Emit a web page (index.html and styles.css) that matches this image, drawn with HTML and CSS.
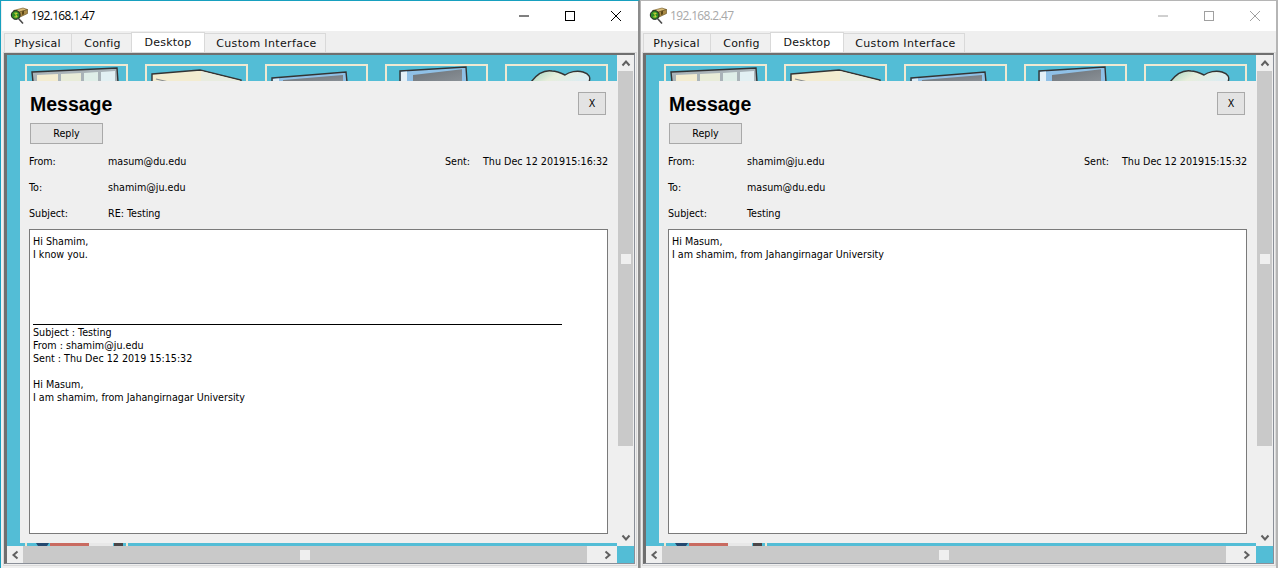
FILE: index.html
```html
<!DOCTYPE html>
<html lang="en">
<head>
    <meta charset="UTF-8">
    <title>Packet Tracer PCs</title>
    <link rel="stylesheet" href="styles.css">
</head>
<body>
    <svg class="defs" width="0" height="0">
        <defs>
            <linearGradient id="cloudFill" x1="0" x2="1" y1="0" y2="0.3">
                <stop offset="0" stop-color="#9fd3bd"/>
                <stop offset="0.5" stop-color="#e8eedc"/>
                <stop offset="1" stop-color="#dcecf0"/>
            </linearGradient>
            <linearGradient id="screenFill" x1="0" x2="1" y1="0" y2="1">
                <stop offset="0" stop-color="#6b7278"/>
                <stop offset="1" stop-color="#8b9197"/>
            </linearGradient>
            <symbol id="pcIcon" viewBox="0 0 18 18">
                <path d="M8.500 11.500l4.500 5" stroke="#fff" stroke-width="3" fill="none"/>
                <path d="M8.500 11.500l4.500 5" stroke="#4a4a4a" stroke-width="1.600" fill="none"/>
                <path d="M3.500 3.500L13 1l4.500 1.500L8 5.500z" fill="#d9bd7a" stroke="#6b5320" stroke-width="0.6"/>
                <path d="M8 5.500l9.500-3v4L9 10.500z" fill="#a98a45" stroke="#5d4818" stroke-width="0.6"/>
                <path d="M12 4.500l2-.7v3.500l-2 .8z" fill="#5d4818"/>
                <circle cx="5.700" cy="8" r="4.400" fill="#2f8a26" stroke="#1d1d1d" stroke-width="1"/>
                <path d="M4.400 6.200h2.800l-1.500 1.600 1.500 2.100H4.400" fill="none" stroke="#e8e43c" stroke-width="1"/>
            </symbol>
            <symbol id="chevUp" viewBox="0 0 10 8">
                <path d="M1.500 6.500L5 2.500l3.500 4" fill="none" stroke="#606060" stroke-width="2"/>
            </symbol>
            <symbol id="chevDown" viewBox="0 0 10 8">
                <path d="M1.500 1.500L5 5.500l3.500-4" fill="none" stroke="#606060" stroke-width="2"/>
            </symbol>
            <symbol id="chevLeft" viewBox="0 0 8 10">
                <path d="M6.500 1.500L2.500 5l4 3.500" fill="none" stroke="#606060" stroke-width="2"/>
            </symbol>
            <symbol id="chevRight" viewBox="0 0 8 10">
                <path d="M1.500 1.500L5.500 5l-4 3.500" fill="none" stroke="#606060" stroke-width="2"/>
            </symbol>
            <symbol id="appTerminal" viewBox="0 0 99 16">
                <path d="M5 6L90 2l1 14H6z" fill="#a9b3b8" stroke="#333" stroke-width="1.400"/>
                <path d="M10 9l21-1v8H10z" fill="#f3ecd0"/>
                <path d="M34 8l20-1v9H34z" fill="#e8ecd8"/>
                <path d="M57 7l14-1v10H57z" fill="#dfeee8"/>
                <path d="M74 6l14-1v11H74z" fill="#e2f0f3"/>
            </symbol>
            <symbol id="appConfig" viewBox="0 0 99 16">
                <path d="M5 8L53 4l41 10v2H5z" fill="#f3ecd0" stroke="#333" stroke-width="1.400"/>
                <path d="M54 5l39 10v1H54z" fill="#e8ecdf"/>
                <path d="M9 13l13 3" stroke="#8a8f90" stroke-width="1.200"/>
            </symbol>
            <symbol id="appScreen" viewBox="0 0 99 16">
                <path d="M5 12L79 6l1 10H5z" fill="#8fc0e6" stroke="#333" stroke-width="1.400"/>
                <path d="M6 13l6-.5V16H6z" fill="#dcecf5"/>
                <path d="M16 14l60-5v7H16z" fill="url(#screenFill)"/>
            </symbol>
            <symbol id="appBrowser" viewBox="0 0 99 16">
                <path d="M13 5L79 1l1 15H13z" fill="#8fc0e6" stroke="#333" stroke-width="1.400"/>
                <path d="M14 6l6-.4V16h-6z" fill="#e4f0f7"/>
                <path d="M26 9l49-5.700V16H26z" fill="url(#screenFill)"/>
            </symbol>
            <symbol id="appCloud" viewBox="0 0 99 16">
                <path d="M24 16C30 8 38 4 45 5c5 0 9 2 13 4 4-3 12-5 18-3 6 2 8 5 6 10z" fill="url(#cloudFill)" stroke="#333" stroke-width="1.400"/>
            </symbol>
            <symbol id="appLower" viewBox="0 0 99 16">
                <path d="M7 0h17l-4 6h-9z" fill="#24486f"/>
                <path d="M23 0h39v6H23z" fill="#c96a60"/>
                <path d="M62 0h24v6H62z" fill="#e8e8e8"/>
                <path d="M87 0h9v6h-9z" fill="#4a4648"/>
            </symbol>
        </defs>
    </svg>

    <div class="desktop">
        <!-- first PC, focused -->
        <section class="window window-active">
            <header class="titlebar">
                <svg class="title-icon"><use href="#pcIcon"/></svg>
                <span class="title-text">192.168.1.47</span>
                <div class="win-controls">
                    <svg class="win-btn" viewBox="0 0 12 12"><path d="M1 6h10" stroke="currentColor" fill="none"/></svg>
                    <svg class="win-btn" viewBox="0 0 12 12"><rect x="1.500" y="1.500" width="9" height="9" stroke="currentColor" fill="none"/></svg>
                    <svg class="win-btn" viewBox="0 0 12 12"><path d="M1 1l10 10M11 1L1 11" stroke="currentColor" fill="none"/></svg>
                </div>
            </header>
            <nav class="tabs">
                <span class="tab tab-physical">Physical</span>
                <span class="tab tab-config">Config</span>
                <span class="tab tab-desktop">Desktop</span>
                <span class="tab tab-custom">Custom Interface</span>
            </nav>
            <div class="panel">
                <div class="viewport">
                    <div class="canvas">
                        <div class="app-row">
                            <div class="tile"><svg class="tile-art"><use href="#appTerminal"/></svg></div>
                            <div class="tile"><svg class="tile-art"><use href="#appConfig"/></svg></div>
                            <div class="tile"><svg class="tile-art"><use href="#appScreen"/></svg></div>
                            <div class="tile"><svg class="tile-art"><use href="#appBrowser"/></svg></div>
                            <div class="tile"><svg class="tile-art"><use href="#appCloud"/></svg></div>
                        </div>
                        <div class="app-row app-row-low">
                            <div class="tile"><svg class="tile-art"><use href="#appLower"/></svg></div>
                        </div>
                        <div class="dialog">
                            <div class="dialog-head">
                                <h1 class="dialog-title">Message</h1>
                                <button class="btn btn-close">X</button>
                            </div>
                            <button class="btn btn-reply">Reply</button>
                            <div class="field field-first">
                                <span class="field-label">From:</span>
                                <span class="field-value">masum@du.edu</span>
                                <span class="sent-label">Sent:</span>
                                <span class="sent-value">Thu Dec 12 201915:16:32</span>
                            </div>
                            <div class="field">
                                <span class="field-label">To:</span>
                                <span class="field-value">shamim@ju.edu</span>
                            </div>
                            <div class="field">
                                <span class="field-label">Subject:</span>
                                <span class="field-value">RE: Testing</span>
                            </div>
                            <div class="msg-body">
                                <div>Hi Shamim,</div>
                                <div>I know you.</div>
                                <div class="quote-rule"></div>
                                <div>Subject : Testing</div>
                                <div>From : shamim@ju.edu</div>
                                <div>Sent : Thu Dec 12 2019 15:15:32</div>
                                <div class="blank-line"></div>
                                <div>Hi Masum,</div>
                                <div>I am shamim, from Jahangirnagar University</div>
                            </div>
                        </div>
                    </div>
                    <div class="vscroll">
                        <span class="scroll-btn"><svg class="chev-v"><use href="#chevUp"/></svg></span>
                        <div class="vtrack"><div class="vtrack-fill"><span class="thumb"></span></div></div>
                        <span class="scroll-btn"><svg class="chev-v"><use href="#chevDown"/></svg></span>
                    </div>
                    <div class="hscroll">
                        <span class="scroll-btn"><svg class="chev-h"><use href="#chevLeft"/></svg></span>
                        <div class="htrack"><span class="thumb"></span></div>
                        <span class="scroll-btn scroll-btn-wide"><svg class="chev-h"><use href="#chevRight"/></svg></span>
                    </div>
                    <div class="corner"></div>
                </div>
            </div>
        </section>

        <!-- second PC -->
        <section class="window window-idle">
            <header class="titlebar">
                <svg class="title-icon"><use href="#pcIcon"/></svg>
                <span class="title-text">192.168.2.47</span>
                <div class="win-controls">
                    <svg class="win-btn" viewBox="0 0 12 12"><path d="M1 6h10" stroke="currentColor" fill="none"/></svg>
                    <svg class="win-btn" viewBox="0 0 12 12"><rect x="1.500" y="1.500" width="9" height="9" stroke="currentColor" fill="none"/></svg>
                    <svg class="win-btn" viewBox="0 0 12 12"><path d="M1 1l10 10M11 1L1 11" stroke="currentColor" fill="none"/></svg>
                </div>
            </header>
            <nav class="tabs">
                <span class="tab tab-physical">Physical</span>
                <span class="tab tab-config">Config</span>
                <span class="tab tab-desktop">Desktop</span>
                <span class="tab tab-custom">Custom Interface</span>
            </nav>
            <div class="panel">
                <div class="viewport">
                    <div class="canvas">
                        <div class="app-row">
                            <div class="tile"><svg class="tile-art"><use href="#appTerminal"/></svg></div>
                            <div class="tile"><svg class="tile-art"><use href="#appConfig"/></svg></div>
                            <div class="tile"><svg class="tile-art"><use href="#appScreen"/></svg></div>
                            <div class="tile"><svg class="tile-art"><use href="#appBrowser"/></svg></div>
                            <div class="tile"><svg class="tile-art"><use href="#appCloud"/></svg></div>
                        </div>
                        <div class="app-row app-row-low">
                            <div class="tile"><svg class="tile-art"><use href="#appLower"/></svg></div>
                        </div>
                        <div class="dialog">
                            <div class="dialog-head">
                                <h1 class="dialog-title">Message</h1>
                                <button class="btn btn-close">X</button>
                            </div>
                            <button class="btn btn-reply">Reply</button>
                            <div class="field field-first">
                                <span class="field-label">From:</span>
                                <span class="field-value">shamim@ju.edu</span>
                                <span class="sent-label">Sent:</span>
                                <span class="sent-value">Thu Dec 12 201915:15:32</span>
                            </div>
                            <div class="field">
                                <span class="field-label">To:</span>
                                <span class="field-value">masum@du.edu</span>
                            </div>
                            <div class="field">
                                <span class="field-label">Subject:</span>
                                <span class="field-value">Testing</span>
                            </div>
                            <div class="msg-body">
                                <div>Hi Masum,</div>
                                <div>I am shamim, from Jahangirnagar University</div>
                            </div>
                        </div>
                    </div>
                    <div class="vscroll">
                        <span class="scroll-btn"><svg class="chev-v"><use href="#chevUp"/></svg></span>
                        <div class="vtrack"><div class="vtrack-fill"><span class="thumb"></span></div></div>
                        <span class="scroll-btn"><svg class="chev-v"><use href="#chevDown"/></svg></span>
                    </div>
                    <div class="hscroll">
                        <span class="scroll-btn"><svg class="chev-h"><use href="#chevLeft"/></svg></span>
                        <div class="htrack"><span class="thumb"></span></div>
                        <span class="scroll-btn scroll-btn-wide"><svg class="chev-h"><use href="#chevRight"/></svg></span>
                    </div>
                    <div class="corner"></div>
                </div>
            </div>
        </section>
    </div>
</body>
</html>
```

FILE: styles.css
```css
html, body {
    margin: 0;
    padding: 0;
    height: 568px;
    overflow: hidden;
    background: #fff;
}

body {
    font-family: "DejaVu Sans Condensed", "Liberation Sans", Arial, sans-serif;
    font-size: 10.650px;
    color: #000;
}

.defs {
    display: block;
    height: 0;
}

.desktop {
    display: flex;
    height: 568px;
}

/* windows */
.window {
    box-sizing: border-box;
    height: 568px;
    display: flex;
    flex-direction: column;
    background: #efefef;
    overflow: hidden;
}

.window-active {
    width: 640px;
    border-top: 1px solid #17a0bf;
    border-left: 1px solid #17a0bf;
    border-right: 2px solid #8c8c8c;
    padding-left: 1px;
}

.window-idle {
    width: 638px;
    border-top: 1px solid #b5b5b5;
    border-left: 1px solid #b5b5b5;
    border-right: 2px solid #b5b5b5;
}

.titlebar {
    flex: none;
    height: 30px;
    display: flex;
    align-items: center;
    background: #fff;
    padding-left: 8px;
}

.title-icon {
    width: 18px;
    height: 18px;
    margin: -1px 3px 0 0;
}

.title-text {
    font-family: "Open Sans", sans-serif;
    font-size: 12px;
    letter-spacing: -0.650px;
    margin-top: -2px;
}

.window-idle .title-text {
    color: #a8a8a8;
}

.win-controls {
    margin-left: auto;
    display: flex;
    gap: 34px;
    padding-right: 16px;
}

.window-idle .win-controls {
    padding-right: 15px;
}

.win-btn {
    width: 12px;
    height: 12px;
    color: #000;
}

.window-idle .win-btn {
    color: #a0a0a0;
}

/* tabs */
.tabs {
    flex: none;
    height: 21px;
    display: flex;
    align-items: flex-end;
    padding-left: 2px;
}

.tab {
    box-sizing: border-box;
    height: 19px;
    display: flex;
    align-items: center;
    justify-content: center;
    border: 1px solid #d9d9d9;
    border-bottom: none;
    background: #f0f0f0;
    font-family: "DejaVu Sans", sans-serif;
    font-size: 11px;
    letter-spacing: 0.200px;
    color: #111;
}

.tab-physical { width: 68px; padding-right: 1px; }
.tab-config { width: 61px; margin-left: -1px; padding-left: 2px; }
.tab-desktop { width: 74px; height: 20px; margin-left: -1px; background: #fff; }
.tab-custom { width: 122px; margin-left: -1px; padding-left: 3px; letter-spacing: 0.350px; }

.panel {
    flex: none;
    box-sizing: border-box;
    width: 634px;
    height: 514px;
    margin-left: 1px;
    border: 1px solid #d9d9d9;
    background: #efefef;
}

.viewport {
    box-sizing: border-box;
    height: 511px;
    width: 631px;
    border-top: 2px solid #6f6f6f;
    border-left: 3px solid #6f6f6f;
    border-right: 1px solid #8a8f98;
    border-bottom: 1px solid #8a8f98;
    display: grid;
    grid-template-columns: 610px 17px;
    grid-template-rows: 491px 17px;
    background: #fff;
}

.canvas {
    position: relative;
    overflow: hidden;
    background: #53bdd6;
    padding: 9px 0 0 18px;
    box-sizing: border-box;
}

.app-row {
    display: flex;
    gap: 17px;
    height: 70px;
}

.app-row-low {
    margin-top: 404px;
}

.tile {
    box-sizing: border-box;
    width: 103px;
    height: 70px;
    border: 2px solid #efe9d2;
    flex: none;
}

.tile-art {
    display: block;
    width: 99px;
    height: 16px;
}

/* message dialog, sits over the app icons */
.dialog {
    position: absolute;
    left: 13px;
    top: 26px;
    box-sizing: border-box;
    width: 597px;
    height: 462px;
    background: #efefef;
    padding: 11px 9px 9px 9px;
    display: flex;
    flex-direction: column;
    align-items: stretch;
}

.dialog-head {
    flex: none;
    display: flex;
    justify-content: space-between;
    align-items: flex-start;
    height: 31px;
    padding-left: 1px;
    padding-right: 2px;
}

.dialog-title {
    margin: 0;
    font-family: "Liberation Sans", Arial, sans-serif;
    font-size: 19.500px;
    line-height: 24px;
    font-weight: bold;
}

.btn {
    box-sizing: border-box;
    border: 1px solid #a9a9a9;
    background: #e3e3e3;
    color: #000;
    font-family: inherit;
    font-size: 10.650px;
    padding: 0;
}

.btn-close {
    width: 28px;
    height: 23px;
}

.btn-reply {
    width: 73px;
    height: 21px;
    margin-left: 1px;
    flex: none;
}

.field {
    box-sizing: border-box;
    display: flex;
    align-items: center;
    height: 26px;
    padding-top: 2px;
    flex: none;
    white-space: nowrap;
}

.field-first {
    margin-top: 3px;
}

.field-label {
    width: 79px;
}

.sent-label {
    margin-left: auto;
    width: 38px;
}

.sent-value {
    width: 125px;
}

.msg-body {
    box-sizing: border-box;
    flex: none;
    height: 305px;
    margin-top: 4px;
    width: 579px;
    border: 1px solid #7a7a7a;
    background: #fff;
    padding: 5px 3px;
    line-height: 13px;
}

.quote-rule {
    width: 529px;
    height: 1px;
    background: #000;
    margin: 63px 0 1px;
}

.blank-line {
    height: 13px;
}

/* scrollbars */
.vscroll {
    display: flex;
    flex-direction: column;
    background: #efefef;
}

.vtrack {
    flex: 1;
    margin: 0 1px;
}

.vtrack-fill {
    height: 375px;
    display: flex;
    justify-content: center;
    align-items: center;
    background: #c9c9c9;
}

.scroll-btn {
    flex: none;
    height: 16px;
    display: flex;
    align-items: center;
    justify-content: center;
    background: #efefef;
}

.hscroll {
    display: flex;
    background: #efefef;
}

.hscroll .scroll-btn {
    width: 16px;
    height: 17px;
}

.hscroll .scroll-btn-wide {
    width: 30px;
    justify-content: flex-end;
    padding-right: 5px;
    box-sizing: border-box;
}

.htrack {
    flex: 1;
    display: flex;
    justify-content: center;
    align-items: center;
    background: #c9c9c9;
}

.thumb {
    width: 10px;
    height: 10px;
    background: #efefef;
}

.chev-v {
    width: 10px;
    height: 8px;
}

.chev-h {
    width: 8px;
    height: 10px;
}

.corner {
    background: #53bdd6;
}
```
